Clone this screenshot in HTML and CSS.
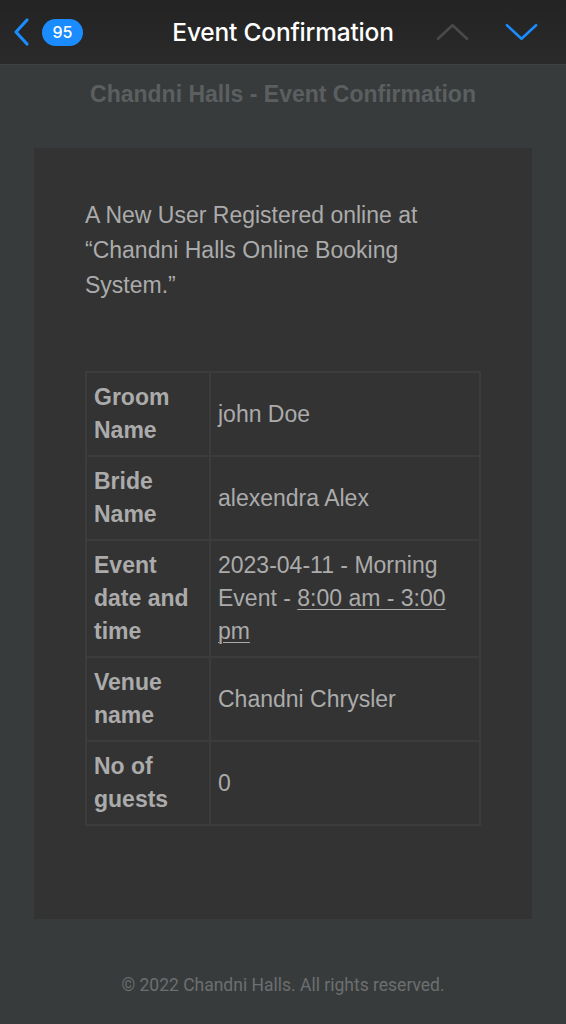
FILE: index.html
```html
<!DOCTYPE html>
<html>
<head>
<meta charset="utf-8">
<link rel="stylesheet" href="styles.css">
</head>
<body>
<header class="topbar">
  <div class="left">
    <svg class="back" width="18" height="30" viewBox="0 0 18 30"><path d="M15 3 L4 15 L15 27" fill="none" stroke="#1a8cff" stroke-width="3.2" stroke-linecap="round" stroke-linejoin="round"/></svg>
    <span class="badge">95</span>
  </div>
  <div class="title">Event Confirmation</div>
  <div class="right">
    <svg width="34" height="18" viewBox="0 0 34 18"><path d="M2 16 L17 2 L32 16" fill="none" stroke="#4a4a4a" stroke-width="2.6" stroke-linecap="round" stroke-linejoin="round"/></svg>
    <svg width="34" height="18" viewBox="0 0 34 18"><path d="M2 2 L17 16 L32 2" fill="none" stroke="#1a8cff" stroke-width="2.6" stroke-linecap="round" stroke-linejoin="round"/></svg>
  </div>
</header>
<main class="page">
  <h1 class="heading">Chandni Halls - Event Confirmation</h1>
  <section class="card">
    <p class="intro">A New User Registered online at “Chandni Halls Online Booking System.”</p>
    <table class="details">
      <tr class="r83"><th>Groom Name</th><td>john Doe</td></tr>
      <tr class="r84"><th>Bride Name</th><td>alexendra Alex</td></tr>
      <tr><th>Event date and time</th><td>2023-04-11 - Morning Event - <span class="u">8:00 am - 3:00 pm</span></td></tr>
      <tr class="r84"><th>Venue name</th><td>Chandni Chrysler</td></tr>
      <tr class="r84"><th>No of guests</th><td>0</td></tr>
    </table>
  </section>
  <footer class="footer">© 2022 Chandni Halls. All rights reserved.</footer>
</main>
</body>
</html>
```
FILE: styles.css
```css
html, body { margin: 0; padding: 0; }
body {
  width: 566px;
  min-height: 1024px;
  background: #383b3c;
  font-family: "Liberation Sans", Arial, sans-serif;
}
.topbar {
  height: 64px;
  border-bottom: 1px solid #3f4142;
  background: linear-gradient(#232323, #2a2a2a);
  display: flex;
  align-items: center;
  justify-content: space-between;
  padding: 0 28px 0 12px;
}
.left { display: flex; align-items: center; gap: 12px; width: 120px; }
.back { display: block; }
.badge {
  background: #1a8cff;
  color: #fff;
  font-family: Inter, "Liberation Sans", sans-serif;
  font-size: 16px;
  font-weight: 500;
  height: 27px;
  width: 41px;
  border-radius: 14px;
  display: flex;
  align-items: center;
  justify-content: center;
}
.title {
  color: #fff;
  font-family: Inter, "Liberation Sans", sans-serif;
  font-size: 24.5px;
  font-weight: 500;
  letter-spacing: -0.2px;
  margin-right: 2px;
}
.right { display: flex; align-items: center; gap: 36px; width: 102px; justify-content: flex-end; }
.right svg { display: block; }
.page { display: flex; flex-direction: column; align-items: center; }
.heading {
  margin: 14px 0 39px;
  font-size: 23px;
  line-height: 30px;
  font-weight: bold;
  color: #5c5f60;
}
.card {
  width: 396px;
  background: #333333;
  padding: 50px 51px 93px;
}
.intro {
  margin: 0 0 68px;
  font-size: 23px;
  line-height: 35px;
  color: #ababab;
}
.details {
  width: 396px;
  border-collapse: collapse;
  font-size: 23px;
  line-height: 33px;
  color: #ababab;
}
.details th, .details td {
  border: 2px solid #3c3c3c;
  padding: 8px 7px;
  text-align: left;
  vertical-align: middle;
}
.details th {
  width: 108px;
  font-weight: bold;
}
.details td { padding-left: 7px; padding-right: 12px; }
.r83 { height: 83px; }
.r84 { height: 84px; }
.u { text-decoration: underline; text-underline-offset: 3px; text-decoration-thickness: 1px; }
.footer {
  margin-top: 56px;
  font-family: Roboto, "Liberation Sans", sans-serif;
  font-size: 17.5px;
  line-height: 20px;
  color: #6c6f70;
  padding-bottom: 40px;
}
```
